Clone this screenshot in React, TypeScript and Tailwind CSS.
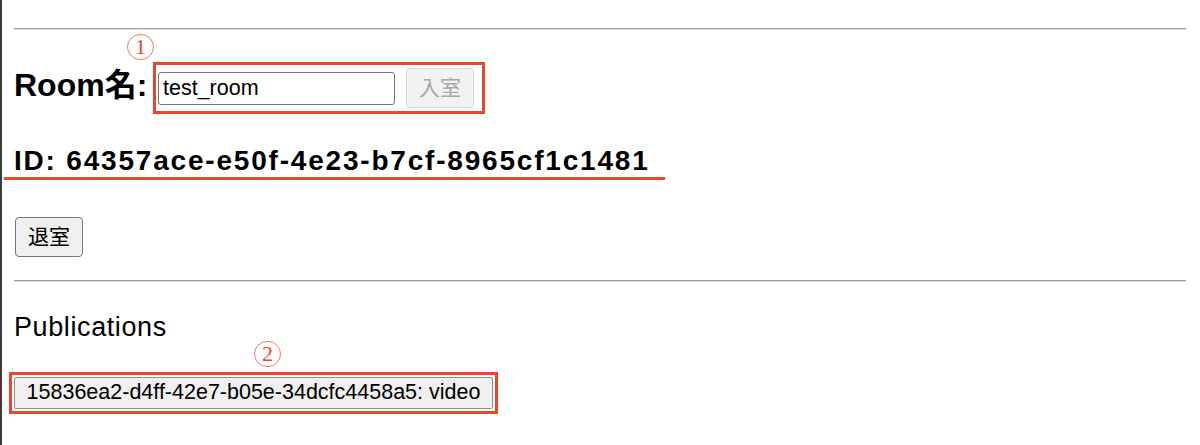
import React from "react";

const RED = "border-[#e8472d]";

function Marker({ n }: { n: string }) {
  return (
    <span className="inline-flex h-[26px] w-[27px] items-center justify-center rounded-full border-[1.5px] border-[#f07b62] font-['Liberation_Serif',serif] text-[22px] leading-none text-[#e8472d]">
      {n}
    </span>
  );
}

function Rule() {
  return <hr className="h-0 border-0 border-t border-b border-t-[#9b9b9b] border-b-[#e2e2e2]" />;
}

export default function App() {
  return (
    <div className="h-[445px] w-[1200px] overflow-hidden border-l-2 border-[#3a3a3a] bg-white pl-[12px] pr-[14px] pt-[28px] font-['Liberation_Sans','Noto_Sans_CJK_JP',sans-serif] text-black">
      <Rule />

      {/* annotation 1 */}
      <div className="flex h-[32px] items-start pl-[113px] pt-[4px]">
        <Marker n="1" />
      </div>

      <div className="flex h-[52px] items-center">
        <h2 className="mb-[6px] w-[139px] shrink-0 text-[32px] font-bold leading-[36px]">Room名:</h2>
        <div className={`flex h-[52px] w-[332px] items-center border-[3px] ${RED} pl-[2px]`}>
          <input
            readOnly
            value="test_room"
            className="h-[33px] w-[237px] rounded-[3px] border border-[#767676] bg-white px-[4px] text-[21.5px] leading-none outline-none"
          />
          <button
            disabled
            className="ml-[11px] h-[40px] w-[68px] rounded-[4px] border border-[#d9d9d9] bg-[#f2f2f2] text-[21px] text-[#a8a8a8]"
          >
            入室
          </button>
        </div>
      </div>

      <div className={`mt-[31px] -ml-[10px] w-[661px] border-b-[3px] ${RED} pl-[10px]`}>
        <h2 className="text-[28px] font-bold leading-[32px] tracking-[1.8px]">
          ID: 64357ace-e50f-4e23-b7cf-8965cf1c1481
        </h2>
      </div>

      <button className="mt-[37px] ml-[1px] block h-[40px] w-[68px] rounded-[4px] border border-[#767676] bg-[#efefef] text-[21px]">
        退室
      </button>

      <div className="mt-[23px]">
        <Rule />
      </div>

      <h3 className="mt-[31px] text-[27px] leading-[28px] tracking-[0.6px]">Publications</h3>

      {/* annotation 2 */}
      <div className="flex h-[31px] items-start pl-[240px] pt-[0px]">
        <Marker n="2" />
      </div>

      <div className={`-ml-[5px] flex h-[42px] w-[489px] items-center border-[3px] ${RED} px-[2px]`}>
        <button className="h-[32px] w-[480px] rounded-[2px] border border-[#8f8f8f] bg-[#efefef] text-[21.5px] leading-none">
          15836ea2-d4ff-42e7-b05e-34dcfc4458a5: video
        </button>
      </div>
    </div>
  );
}
